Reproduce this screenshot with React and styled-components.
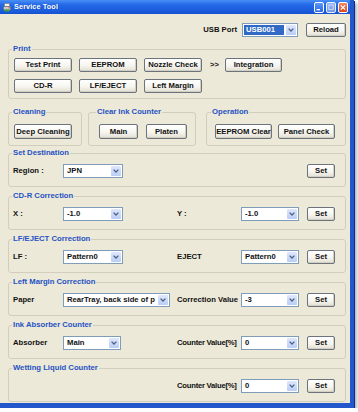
import React from 'react';
import styled, { createGlobalStyle } from 'styled-components';

const Global = createGlobalStyle`
  html, body { margin: 0; padding: 0; background: #ffffff; }
  body { font-family: "Liberation Sans", Arial, sans-serif; }
  * { box-sizing: border-box; }
`;

const FONT = `"Liberation Sans", Arial, sans-serif`;

const Window = styled.div`
  width: 354px;
  height: 408px;
  display: flex;
  flex-direction: column;
  background: #ece9d8;
  border-right: 4px solid #2456cc;
  border-bottom: 5px solid #2456cc;
  box-shadow: 1px 1px 0 #0b2c8a, 3px 3px 3px rgba(0, 0, 0, 0.3);
`;

const TitleBar = styled.div`
  height: 14px;
  flex: none;
  display: flex;
  align-items: center;
  padding: 0 2px 0 3px;
  background: linear-gradient(#4a8ff7 0%, #2368e6 35%, #1a5bdc 80%, #1550d0 100%);
`;

const TitleText = styled.span`
  margin-left: 3px;
  color: #fff;
  font: bold 7.3px/1 ${FONT};
  letter-spacing: 0.1px;
  text-shadow: 1px 0 0 rgba(0, 0, 40, 0.25);
`;

const Controls = styled.div`
  margin-left: auto;
  display: flex;
  gap: 2px;
`;

const WinBtn = styled.div`
  width: 10px;
  height: 11px;
  border: 1px solid #fff;
  border-radius: 2px;
  display: flex;
  align-items: center;
  justify-content: center;
  background: ${p =>
    p.$kind === 'close'
      ? 'linear-gradient(#f08a6a, #d9461f)'
      : p.$kind === 'max'
      ? 'linear-gradient(#9fbdf6, #79a0ef)'
      : 'linear-gradient(#5b98f8, #2c67e2)'};
  opacity: ${p => (p.$kind === 'max' ? 0.9 : 1)};
`;

const Content = styled.div`
  flex: 1;
  display: flex;
  flex-direction: column;
  padding: 9px 4px 1px 8px;
`;

const TopRow = styled.div`
  height: 14px;
  display: flex;
  align-items: center;
  justify-content: flex-end;
`;

const Label = styled.span`
  font: bold 7.7px/14px ${FONT};
  color: #111;
  white-space: nowrap;
  letter-spacing: ${p => (p.$tight ? '-0.25px' : 'normal')};
  margin-right: ${p => p.$mr ?? 0}px;
  grid-column: ${p => p.$col ?? 'auto'};
`;

const Group = styled.fieldset`
  margin: ${p => p.$mt ?? 0}px ${p => p.$mr ?? 0}px 0 0;
  padding: 0;
  border: 1px solid #d2cebd;
  border-radius: 3px;
  min-width: 0;
  width: ${p => (p.$w ? `${p.$w}px` : 'auto')};
  flex: ${p => (p.$grow ? 1 : 'none')};
`;

const Legend = styled.legend`
  margin-left: ${p => p.$ml ?? 3}px;
  padding: 0 1px;
  font: bold 7.7px/10px ${FONT};
  color: #2552c4;
  white-space: nowrap;
`;

const GroupBody = styled.div`
  padding: ${p => p.$pad};
  display: flex;
  flex-direction: column;
  gap: 7px;
`;

const BtnRow = styled.div`
  display: flex;
  align-items: center;
  gap: ${p => p.$gap ?? 7}px;
`;

const Btn = styled.button`
  width: ${p => p.$w}px;
  height: ${p => p.$h ?? 14}px;
  margin: 0 0 0 ${p => p.$ml ?? 0}px;
  padding: 0;
  border: 1px solid #6b737c;
  border-radius: 2px;
  background: linear-gradient(#ffffff, #f6f5ef 55%, #e2dfd3);
  box-shadow: inset -1px -1px 0 #d3cfc1;
  font: bold 7.7px/1 ${FONT};
  color: #111;
  white-space: nowrap;
  overflow: hidden;
  display: flex;
  align-items: center;
  justify-content: center;
  grid-column: ${p => p.$col ?? 'auto'};
`;

const Arrows = styled.span`
  font: bold 7.7px/14px ${FONT};
  color: #222;
  margin: 0 -1px 0 1px;
`;

const GroupRow = styled.div`
  display: flex;
  margin-top: ${p => p.$mt ?? 0}px;
  align-items: flex-start;
`;

const FormRow = styled.div`
  height: 14px;
  display: grid;
  grid-template-columns: 50px 114px 64px 66px 28px;
  align-items: center;
`;

const SelectBox = styled.div`
  width: ${p => p.$w}px;
  height: 14px;
  border: 1px solid #7f9db9;
  background: #fff;
  display: flex;
  align-items: stretch;
  grid-column: ${p => p.$col ?? 'auto'};
`;

const SelectValue = styled.span`
  flex: 1;
  min-width: 0;
  margin: 1px;
  padding-left: 2px;
  font: bold 7.7px/10px ${FONT};
  color: ${p => (p.$hl ? '#fff' : '#111')};
  background: ${p => (p.$hl ? '#316ac5' : 'transparent')};
  white-space: nowrap;
  overflow: hidden;
`;

const SelectArrow = styled.span`
  width: 10px;
  flex: none;
  margin: 1px;
  border-radius: 1px;
  background: linear-gradient(#dfe8fc, #b9cdf6);
  display: flex;
  align-items: center;
  justify-content: center;
`;

const Chevron = () => (
  <svg width="6" height="4" viewBox="0 0 6 4">
    <path d="M0.6 0.6 L3 3 L5.4 0.6" fill="none" stroke="#4d6185" strokeWidth="1.3" />
  </svg>
);

const Select = ({ value, w, col, hl }) => (
  <SelectBox $w={w} $col={col}>
    <SelectValue $hl={hl}>{value}</SelectValue>
    <SelectArrow>
      <Chevron />
    </SelectArrow>
  </SelectBox>
);

const AppIcon = () => (
  <svg width="8" height="9" viewBox="0 0 8 9">
    <rect x="1.5" y="0.5" width="5" height="3" fill="#f4f4f4" stroke="#777" strokeWidth="0.6" />
    <rect x="0.5" y="3.5" width="7" height="3.5" fill="#c9c9c9" stroke="#666" strokeWidth="0.6" />
    <rect x="1.5" y="6.5" width="5" height="2" fill="#3fa33f" />
    <rect x="5.5" y="4.3" width="1.2" height="1" fill="#d8342a" />
  </svg>
);

const MinIcon = () => (
  <svg width="6" height="7" viewBox="0 0 6 7">
    <rect x="0.5" y="5" width="3.5" height="1.3" fill="#fff" />
  </svg>
);
const MaxIcon = () => (
  <svg width="6" height="7" viewBox="0 0 6 7">
    <rect x="0.8" y="1" width="4.4" height="4.4" fill="none" stroke="#e6eefc" strokeWidth="0.9" />
  </svg>
);
const CloseIcon = () => (
  <svg width="6" height="7" viewBox="0 0 6 7">
    <path d="M0.8 1.3 L5.2 5.7 M5.2 1.3 L0.8 5.7" stroke="#fff" strokeWidth="1.2" />
  </svg>
);

const FormGroup = ({ title, mt = 4, children }) => (
  <Group $mt={mt}>
    <Legend $ml={3}>{title}</Legend>
    <GroupBody $pad="6px 0 8px 4px">{children}</GroupBody>
  </Group>
);

export default function App() {
  return (
    <>
      <Global />
      <Window>
        <TitleBar>
          <AppIcon />
          <TitleText>Service Tool</TitleText>
          <Controls>
            <WinBtn $kind="min"><MinIcon /></WinBtn>
            <WinBtn $kind="max"><MaxIcon /></WinBtn>
            <WinBtn $kind="close"><CloseIcon /></WinBtn>
          </Controls>
        </TitleBar>
        <Content>
          <TopRow>
            <Label $mr={5}>USB Port</Label>
            <Select value="USB001" w={56} hl />
            <Btn $w={40} $h={14} $ml={8}>Reload</Btn>
          </TopRow>

          <Group $mt={7}>
            <Legend $ml={3}>Print</Legend>
            <GroupBody $pad="4px 0 5px 5px">
              <BtnRow>
                <Btn $w={58}>Test Print</Btn>
                <Btn $w={58}>EEPROM</Btn>
                <Btn $w={58}>Nozzle Check</Btn>
                <Arrows>&gt;&gt;</Arrows>
                <Btn $w={57}>Integration</Btn>
              </BtnRow>
              <BtnRow>
                <Btn $w={58}>CD-R</Btn>
                <Btn $w={58}>LF/EJECT</Btn>
                <Btn $w={58}>Left Margin</Btn>
              </BtnRow>
            </GroupBody>
          </Group>

          <GroupRow $mt={8}>
            <Group $w={74} $mr={6}>
              <Legend $ml={3}>Cleaning</Legend>
              <GroupBody $pad="7px 0 6px 5px">
                <BtnRow>
                  <Btn $w={58} $h={15}>Deep Cleaning</Btn>
                </BtnRow>
              </GroupBody>
            </Group>
            <Group $w={108} $mr={10}>
              <Legend $ml={7}>Clear Ink Counter</Legend>
              <GroupBody $pad="7px 0 6px 10px">
                <BtnRow $gap={8}>
                  <Btn $w={39} $h={15}>Main</Btn>
                  <Btn $w={41} $h={15}>Platen</Btn>
                </BtnRow>
              </GroupBody>
            </Group>
            <Group $grow>
              <Legend $ml={4}>Operation</Legend>
              <GroupBody $pad="7px 0 6px 8px">
                <BtnRow $gap={6}>
                  <Btn $w={57} $h={15}>EEPROM Clear</Btn>
                  <Btn $w={57} $h={15}>Panel Check</Btn>
                </BtnRow>
              </GroupBody>
            </Group>
          </GroupRow>

          <FormGroup title="Set Destination" mt={2}>
            <FormRow>
              <Label>Region :</Label>
              <Select value="JPN" w={60} />
              <Btn $w={28} $col={5}>Set</Btn>
            </FormRow>
          </FormGroup>

          <FormGroup title="CD-R Correction">
            <FormRow>
              <Label>X :</Label>
              <Select value="-1.0" w={60} />
              <Label>Y :</Label>
              <Select value="-1.0" w={58} />
              <Btn $w={28}>Set</Btn>
            </FormRow>
          </FormGroup>

          <FormGroup title="LF/EJECT Correction">
            <FormRow>
              <Label>LF :</Label>
              <Select value="Pattern0" w={60} />
              <Label>EJECT</Label>
              <Select value="Pattern0" w={58} />
              <Btn $w={28}>Set</Btn>
            </FormRow>
          </FormGroup>

          <FormGroup title="Left Margin Correction">
            <FormRow>
              <Label>Paper</Label>
              <Select value="RearTray, back side of p" w={107} />
              <Label>Correction Value</Label>
              <Select value="-3" w={58} />
              <Btn $w={28}>Set</Btn>
            </FormRow>
          </FormGroup>

          <FormGroup title="Ink Absorber Counter">
            <FormRow>
              <Label>Absorber</Label>
              <Select value="Main" w={58} />
              <Label $tight>Counter Value[%]</Label>
              <Select value="0" w={58} />
              <Btn $w={28}>Set</Btn>
            </FormRow>
          </FormGroup>

          <FormGroup title="Wetting Liquid Counter">
            <FormRow>
              <Label $col={3} $tight>Counter Value[%]</Label>
              <Select value="0" w={58} col={4} />
              <Btn $w={28} $col={5}>Set</Btn>
            </FormRow>
          </FormGroup>
        </Content>
      </Window>
    </>
  );
}
